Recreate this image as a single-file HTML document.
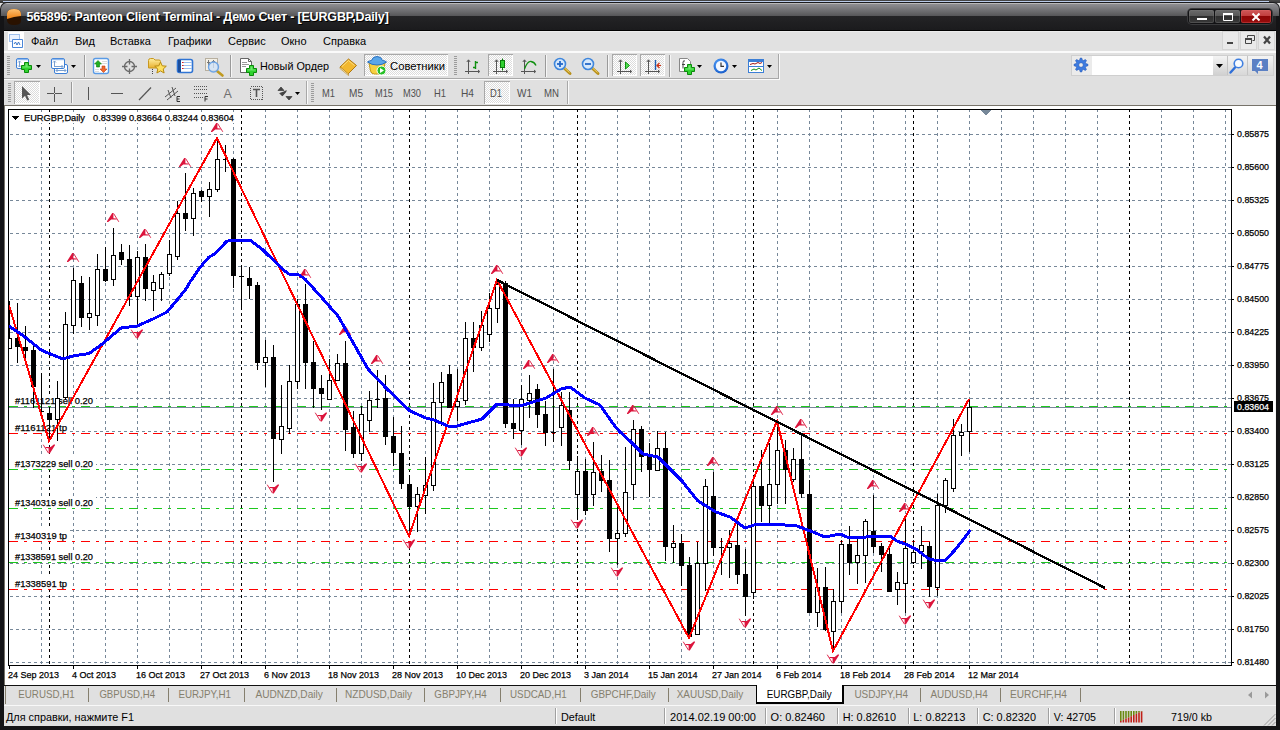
<!DOCTYPE html><html><head><meta charset="utf-8"><title>565896: Panteon Client Terminal</title><style>
html,body{margin:0;padding:0}
body{width:1280px;height:730px;position:relative;overflow:hidden;background:#e0e0e0;font-family:"Liberation Sans",sans-serif;font-size:11px;color:#000}
.a{position:absolute}
.t{position:absolute;white-space:nowrap;line-height:12px}
#title{left:0;top:2px;width:1280px;height:29px;background:#1b1b1d;border-radius:7px 7px 0 0}
#tgrad{left:1px;top:3px;width:1278px;height:13px;background:linear-gradient(#b8b8b8 0,#b8b8b8 1px,#8e8e92 1px,#565658 13px);border-radius:6px 6px 0 0}
#ttext{left:26.5px;top:10px;font-weight:bold;font-size:12.5px;letter-spacing:-0.17px;line-height:15px;color:#fff;text-shadow:1px 1px 0 #000;transform-origin:0 0}
.menu{top:35px;font-size:11px}
.wb{top:10px;height:13px;border-radius:2px}
.mdi{top:32px;width:15px;height:17px;background:#e9e9e9;box-shadow:0 0 0 1px #d4d4d4}
.sep{width:1px;background:#9a9a9a;box-shadow:1px 0 0 #f4f4f4}
.tab{top:688px;color:#86806f;font-size:11px}
.tsep{top:688px;width:1px;height:13px;background:#86806f}
.sb{top:711px}
.ssep{top:709px;width:1px;height:15px;background:#a8a8a8;box-shadow:1px 0 0 #fff}
.tf{top:87px;font-size:10px;color:#333}
</style></head><body>
<div class="a" style="left:0;top:0;width:1280px;height:3px;background:linear-gradient(#4a4a4a,#333)"></div>
<div class="a" style="left:3px;top:1px;width:1266px;height:1px;background:#b9cbea"></div>
<div class="a" id="title"></div><div class="a" id="tgrad"></div>
<div class="a" style="left:0;top:16px;width:1280px;height:14px;background:linear-gradient(#242426,#1b1b1d)"></div><div class="a" style="left:0;top:30px;width:1280px;height:1px;background:#000"></div>
<svg class="a" style="left:6px;top:8px" width="17" height="18" viewBox="0 0 17 18"><defs><linearGradient id="og" x1="0" y1="0" x2="0" y2="1"><stop offset="0" stop-color="#ffc070"/><stop offset="1" stop-color="#f08010"/></linearGradient></defs><path d="M1 12V6Q1 1 8 1Q15 1 15 6V13Q15 17 8 17Q1 17 1 12z" fill="#2a1200"/><path d="M1 11V6Q1 1 8 1Q15 1 15 6V8Q8 8.5 1 11z" fill="url(#og)"/></svg>
<div class="t" id="ttext">565896: Panteon Client Terminal - Демо Счет - [EURGBP,Daily]</div>
<div class="a" style="left:1188px;top:9px;width:84px;height:15px;border-radius:4px;background:#121214;box-shadow:0 0 0 1px #3a3a3c"></div>
<div class="a wb" style="left:1189px;width:25px;background:linear-gradient(#6a6a6a 0,#565656 50%,#2e2e2e 50%,#3a3a3a 100%);box-shadow:inset 0 0 0 1px #7a7a7a55"></div>
<div class="a wb" style="left:1215px;width:25px;background:linear-gradient(#6a6a6a 0,#565656 50%,#2e2e2e 50%,#3a3a3a 100%);box-shadow:inset 0 0 0 1px #7a7a7a55"></div>
<div class="a wb" style="left:1241px;width:30px;background:linear-gradient(#d05858 0,#c03c3c 50%,#8e0606 50%,#980c0c 100%);box-shadow:inset 0 0 0 1px #e0707055"></div>
<svg class="a" style="left:1189px;top:10px" width="83" height="14" viewBox="0 0 83 14"><rect x="8" y="8" width="10" height="2" fill="#fff"/><path d="M34.5 4H43.5V10.5H34.5z" fill="none" stroke="#fff" stroke-width="1"/><rect x="34" y="3" width="10" height="2" fill="#fff"/><path d="M63.5 3.5L70.5 10.5M70.5 3.5L63.5 10.5" stroke="#fff" stroke-width="2"/></svg>
<div class="a" style="left:0;top:16px;width:4px;height:714px;background:#141416"></div>
<div class="a" style="left:1276px;top:16px;width:4px;height:714px;background:#141416"></div>
<div class="a" style="left:0;top:726px;width:1280px;height:4px;background:#141416"></div>
<div class="a" style="left:4px;top:31px;width:1272px;height:20px;background:#e1e1e1"></div><div class="a" style="left:4px;top:31px;width:1272px;height:1px;background:#ececec"></div>
<div class="a" style="left:4px;top:51px;width:1272px;height:2px;background:#fafafa"></div>
<div class="a" style="left:8px;top:32px;width:16px;height:18px;background:#fff"></div>
<svg class="a" style="left:8px;top:32px" width="16" height="18" viewBox="0 0 16 18"><path d="M1.500 2.500H11.500V9.500H1.500z" fill="#eaf2ff" stroke="#4a86d8" stroke-dasharray="1 1"/><path d="M4.500 7.500H14.500V15.500H4.500z" fill="#fff" stroke="#4a86d8"/><path d="M6 12l1.500-2 1.500 3 1.500-3 1.500 3" fill="none" stroke="#3a76c8"/></svg>
<div class="t menu" style="left:31px">Файл</div>
<div class="t menu" style="left:75px">Вид</div>
<div class="t menu" style="left:110px">Вставка</div>
<div class="t menu" style="left:168px">Графики</div>
<div class="t menu" style="left:228px">Сервис</div>
<div class="t menu" style="left:281px">Окно</div>
<div class="t menu" style="left:323px">Справка</div>
<div class="a mdi" style="left:1223px"></div>
<div class="a mdi" style="left:1241px"></div>
<div class="a mdi" style="left:1259px"></div>
<svg class="a" style="left:1223px;top:32px" width="52" height="17" viewBox="0 0 52 17"><rect x="4" y="10" width="6" height="2" fill="#444"/><path d="M24.500 5.500V3.500H31.500V8.500H29.500M22.500 6.500H28.500V11.500H22.500z" fill="none" stroke="#444"/><path d="M22 6h7v2h-7z" fill="#444"/><path d="M41 4.500L47 11.500M47 4.500L41 11.500" stroke="#444" stroke-width="2.200"/></svg>
<div class="a" style="left:4px;top:78px;width:775px;height:1px;background:#a8a8a8"></div>
<div class="a" style="left:4px;top:79px;width:776px;height:1px;background:#fafafa"></div>
<svg class="a" style="left:0;top:0" width="1280" height="110" viewBox="0 0 1280 110" font-family="Liberation Sans, sans-serif" font-size="11px"><defs><pattern id="chk" width="2" height="2" patternUnits="userSpaceOnUse"><rect width="2" height="2" fill="#fff"/><rect width="1" height="1" fill="#dcdcdc"/><rect x="1" y="1" width="1" height="1" fill="#dcdcdc"/></pattern><linearGradient id="bl" x1="0" y1="0" x2="0" y2="1"><stop offset="0" stop-color="#8fc0f4"/><stop offset="1" stop-color="#2f78d8"/></linearGradient><linearGradient id="yl" x1="0" y1="0" x2="0" y2="1"><stop offset="0" stop-color="#fff0a0"/><stop offset="1" stop-color="#e8b030"/></linearGradient><radialGradient id="ck" cx=".4" cy=".35" r=".8"><stop offset="0" stop-color="#58a6ff"/><stop offset="1" stop-color="#0b4fc0"/></radialGradient></defs><path d="M7 56.5h3M7 58.5h3M7 60.5h3M7 62.5h3M7 64.5h3M7 66.5h3M7 68.5h3M7 70.5h3M7 72.5h3M7 74.5h3" stroke="#9c9c9c" shape-rendering="crispEdges"/><rect x="16.500" y="58.500" width="12" height="10" rx="1.500" fill="#fff" stroke="#3c7fd6"/><path d="M17 59.500h11" stroke="#8db8ee" stroke-width="1.400"/><path d="M19.500 61v6M18 62.500l1.500-1.500 1.500 1.500M18 65.500l1.500 1.500 1.500-1.500" stroke="#7aa0d0" fill="none"/><path d="M24.5 62.5h4v3h3v4h-3v3h-4v-3h-3v-4h3z" fill="#2fd22f" stroke="#0a8a0a"/><path d="M25.5 63.5h2v3h3v1h-8v-1h3z" fill="#8cf08c" opacity=".7"/><path d="M36 65h5l-2.500 3z" fill="#000"/><rect x="54.500" y="64.500" width="13" height="9" rx="1.500" fill="#fff" stroke="#3c7fd6"/><path d="M56 70.500h10M57.500 69l-1.500 1.500 1.500 1.500M64.500 69l1.500 1.500-1.500 1.500" stroke="#7aa0d0" fill="none"/><rect x="51.500" y="58.500" width="13" height="10" rx="1.500" fill="#fff" stroke="#3c7fd6"/><path d="M52 59.500h12" stroke="#8db8ee" stroke-width="1.400"/><path d="M54.500 61v6M53 62.500l1.500-1.500 1.500 1.500M54 66.500h9M61.500 65l1.500 1.500-1.500 1.500" stroke="#7aa0d0" fill="none"/><path d="M71 65h5l-2.500 3z" fill="#000"/><path d="M84.5 55V77" stroke="#9a9a9a" shape-rendering="crispEdges"/><path d="M85.5 55V77" stroke="#f6f6f6" shape-rendering="crispEdges"/><rect x="93.500" y="58.500" width="15" height="15" rx="2" fill="#fff" stroke="#5a9be6" stroke-width="1.400"/><path d="M98 60.500l3.500 3.500h-2v3h-3v-3h-2z" fill="#22b022" stroke="#0c7c0c" stroke-width=".6"/><path d="M103.500 72.500l-3.500-3.500h2v-3h3v3h2z" fill="#f06a30" stroke="#c03c10" stroke-width=".6"/><path d="M102 61.500h5M102 63.500h5M95 69.500h4M95 71.500h4" stroke="#dcdcdc"/><circle cx="129.500" cy="66.500" r="5" fill="none" stroke="#6a6a6a" stroke-width="1.300"/><path d="M129.500 59v5.500M129.500 68.500V74M122 66.500h5.500M131.500 66.500H137" stroke="#6a6a6a" stroke-width="1.300"/><path d="M148.500 60.500q0-2 2-2h3l1.500 1.500h4q1.500 0 1.500 1.500v6.500h-12z" fill="url(#yl)" stroke="#c89820"/><path d="M152.500 69v6" stroke="#444" stroke-dasharray="1 1"/><path d="M160.500 62l1.700 3.800 4.100.4-3.100 2.800.9 4-3.600-2.100-3.600 2.100.9-4-3.100-2.800 4.100-.4z" fill="#ffe060" stroke="#b88a10" stroke-width="1"/><rect x="177.500" y="59.500" width="15" height="13" rx="2" fill="#fff" stroke="#2f74d4" stroke-width="1.600"/><rect x="178" y="60" width="3" height="12" fill="#1c4e9c"/><path d="M182 62.500h10M182 65.500h10M182 68.500h10" stroke="#9cc0f0"/><path d="M182 62.500h1.500M182 65.500h1.500M182 68.500h1.500" stroke="#e02020"/><rect x="205.500" y="58.500" width="12" height="12" fill="#f4f0e6" stroke="#b8b0a0"/><path d="M208.500 60v8M213.500 60v8M207 62.500h3M212 61.500h3" stroke="#777"/><path d="M217 71L222.500 75.500" stroke="#c09a20" stroke-width="2.600" stroke-linecap="round"/><circle cx="213.500" cy="67" r="5" fill="#cfe2f8" fill-opacity=".8" stroke="#6ea4e4" stroke-width="1.400"/><path d="M230.5 55V77" stroke="#9a9a9a" shape-rendering="crispEdges"/><path d="M231.5 55V77" stroke="#f6f6f6" shape-rendering="crispEdges"/><path d="M240.500 58.500h8l3 3v11h-11z" fill="#fff" stroke="#666"/><path d="M248.500 58.500v3h3" fill="none" stroke="#666"/><path d="M242 62.500h5M242 64.500h7M242 66.500h4" stroke="#999"/><path d="M249.5 65.5h4v3h3v4h-3v3h-4v-3h-3v-4h3z" fill="#2fd22f" stroke="#0a8a0a"/><path d="M250.5 66.5h2v3h3v1h-8v-1h3z" fill="#8cf08c" opacity=".7"/><text x="260" y="70" textLength="69" lengthAdjust="spacingAndGlyphs">Новый Ордер</text><path d="M340 67l8.500-8 8 6.500-8.500 8.500z" fill="#f2b830" stroke="#b07810"/><path d="M340 67l8.500 7 0 1.500-8.500-7z" fill="#fff2c0" stroke="#b07810" stroke-width=".6"/><path d="M342 66.500l6.500-6 6 5" fill="none" stroke="#ffe080"/><rect x="364" y="54" width="84" height="22" fill="url(#chk)"/><path d="M364.5 76V54.5H448" fill="none" stroke="#a8a8a8" shape-rendering="crispEdges"/><path d="M447.5 55V75.5H365" fill="none" stroke="#fff" shape-rendering="crispEdges"/><path d="M369 63q8 -2 16 0l-1.500 8q-1 3-4 3h-5q-3 0-4-3z" fill="#f6d040" stroke="#c49a18"/><path d="M367.500 62q2-1.500 4-1.500q1-4 5.500-4t5.500 4q2.500 0 4 1.500q-4 3-9.500 3t-9.500-3z" fill="#5aa6e8" stroke="#2a70c0"/><circle cx="381.500" cy="70.500" r="4.500" fill="#28c028" stroke="#fff"/><path d="M380 68l4 2.500-4 2.500z" fill="#fff"/><text x="390" y="70" textLength="55" lengthAdjust="spacingAndGlyphs">Советники</text><path d="M454 56.5h3M454 58.5h3M454 60.5h3M454 62.5h3M454 64.5h3M454 66.5h3M454 68.5h3M454 70.5h3M454 72.5h3M454 74.5h3" stroke="#9c9c9c" shape-rendering="crispEdges"/><path d="M468.5 60V74M465 71.500H479" stroke="#555" fill="none" shape-rendering="crispEdges"/><path d="M466.8 62L468.5 59.800L470.2 62M478 70L479.8 71.500L478 73" stroke="#555" fill="none"/><path d="M475.500 61v8M475.500 62.500h2.500M473 67.500h2.500" stroke="#109010" stroke-width="1.400" fill="none"/><rect x="488" y="54" width="25" height="22" fill="url(#chk)"/><path d="M488.5 76V54.5H513" fill="none" stroke="#a8a8a8" shape-rendering="crispEdges"/><path d="M512.5 55V75.5H489" fill="none" stroke="#fff" shape-rendering="crispEdges"/><path d="M496.5 60V74M493 71.500H507" stroke="#555" fill="none" shape-rendering="crispEdges"/><path d="M494.8 62L496.5 59.800L498.2 62M506 70L507.8 71.500L506 73" stroke="#555" fill="none"/><path d="M502.500 58.500v12" stroke="#0a7a0a"/><rect x="500.500" y="60.500" width="4" height="7" fill="#30d030" stroke="#0a7a0a"/><path d="M524.5 60V74M521 71.500H535" stroke="#555" fill="none" shape-rendering="crispEdges"/><path d="M522.8 62L524.5 59.800L526.2 62M534 70L535.8 71.500L534 73" stroke="#555" fill="none"/><path d="M524.500 69q3-8 6.500-7.500t5 4" stroke="#109010" stroke-width="1.300" fill="none"/><path d="M545.5 55V77" stroke="#9a9a9a" shape-rendering="crispEdges"/><path d="M546.5 55V77" stroke="#f6f6f6" shape-rendering="crispEdges"/><path d="M564 68L570 73.5" stroke="#b8901c" stroke-width="3" stroke-linecap="round"/><path d="M564 67.5L569.5 72.5" stroke="#f0d060" stroke-width="1"/><circle cx="560" cy="64" r="5.500" fill="#d6e8fb" stroke="#3f86dc" stroke-width="1.600"/><path d="M557 64h6" stroke="#2468c8" stroke-width="1.800"/><path d="M560 61v6" stroke="#2468c8" stroke-width="1.800"/><path d="M592 68L598 73.5" stroke="#b8901c" stroke-width="3" stroke-linecap="round"/><path d="M592 67.5L597.5 72.5" stroke="#f0d060" stroke-width="1"/><circle cx="588" cy="64" r="5.500" fill="#d6e8fb" stroke="#3f86dc" stroke-width="1.600"/><path d="M585 64h6" stroke="#2468c8" stroke-width="1.800"/><path d="M607.5 55V77" stroke="#9a9a9a" shape-rendering="crispEdges"/><path d="M608.5 55V77" stroke="#f6f6f6" shape-rendering="crispEdges"/><rect x="612" y="54" width="25" height="22" fill="url(#chk)"/><path d="M612.5 76V54.5H637" fill="none" stroke="#a8a8a8" shape-rendering="crispEdges"/><path d="M636.5 55V75.5H613" fill="none" stroke="#fff" shape-rendering="crispEdges"/><path d="M620.5 60V74M617 71.500H631" stroke="#555" fill="none" shape-rendering="crispEdges"/><path d="M618.8 62L620.5 59.800L622.2 62M630 70L631.8 71.500L630 73" stroke="#555" fill="none"/><path d="M625.500 62l4 3.500-4 3.500z" fill="#50e050" stroke="#109010"/><rect x="640" y="54" width="25" height="22" fill="url(#chk)"/><path d="M640.5 76V54.5H665" fill="none" stroke="#a8a8a8" shape-rendering="crispEdges"/><path d="M664.5 55V75.5H641" fill="none" stroke="#fff" shape-rendering="crispEdges"/><path d="M648.5 60V74M645 71.500H659" stroke="#555" fill="none" shape-rendering="crispEdges"/><path d="M646.8 62L648.5 59.800L650.2 62M658 70L659.8 71.500L658 73" stroke="#555" fill="none"/><path d="M655.500 60v10" stroke="#1c5cb0" stroke-width="1.400"/><path d="M657 65.500h4M659.500 63l-2.500 2.500 2.500 2.500" stroke="#d03010" fill="none" stroke-width="1.200"/><path d="M669.5 55V77" stroke="#9a9a9a" shape-rendering="crispEdges"/><path d="M670.5 55V77" stroke="#f6f6f6" shape-rendering="crispEdges"/><path d="M679.500 58.500h8l3 3v10h-11z" fill="#fff" stroke="#888"/><path d="M685 61q-2-1-2 1.500v6M682 64.500h3" stroke="#444" fill="none"/><path d="M687.5 64.5h4v3h3v4h-3v3h-4v-3h-3v-4h3z" fill="#2fd22f" stroke="#0a8a0a"/><path d="M688.5 65.5h2v3h3v1h-8v-1h3z" fill="#8cf08c" opacity=".7"/><path d="M697 65h5l-2.500 3z" fill="#000"/><circle cx="721" cy="66" r="7.500" fill="url(#ck)"/><circle cx="721" cy="66" r="5.200" fill="#f4f8ff"/><path d="M721 62.500v3.800h3" stroke="#333" fill="none" stroke-width="1.200"/><path d="M732 65h5l-2.500 3z" fill="#000"/><rect x="748.500" y="59.500" width="15" height="13" fill="#fff" stroke="#3c7fd6"/><rect x="748" y="59" width="16" height="3" fill="#3c7fd6"/><path d="M749 66.500h14" stroke="#3c7fd6"/><path d="M750 64.500l3-1 2 .5 3-1.500 2 1 2-1" stroke="#a01818" fill="none"/><path d="M751 70.500l3-1.500 2 1 3-2 3 2.500" stroke="#109010" fill="none"/><path d="M767 65h5l-2.500 3z" fill="#000"/><path d="M778.500 54V78" stroke="#a8a8a8" shape-rendering="crispEdges"/><path d="M779.500 54V79" stroke="#fafafa" shape-rendering="crispEdges"/></svg>
<svg class="a" style="left:0;top:0" width="1280" height="110" viewBox="0 0 1280 110" font-family="Liberation Sans, sans-serif" font-size="10.300px"><path d="M8 83.5h3M8 85.5h3M8 87.5h3M8 89.5h3M8 91.5h3M8 93.5h3M8 95.5h3M8 97.5h3M8 99.5h3M8 101.5h3" stroke="#9c9c9c" shape-rendering="crispEdges"/><rect x="14" y="81" width="26" height="23" fill="url(#chk)"/><path d="M14.5 104V81.5H40" fill="none" stroke="#a8a8a8" shape-rendering="crispEdges"/><path d="M39.5 82V103.5H15" fill="none" stroke="#fff" shape-rendering="crispEdges"/><path d="M22 86v12.500l3-2.800 2.200 4.800 2-1-2.200-4.600h4z" fill="#555"/><path d="M54.500 86.500v15M47 93.500h15" stroke="#555" shape-rendering="crispEdges"/><rect x="54" y="93" width="1" height="1" fill="#e0e0e0"/><path d="M71.5 82V103" stroke="#9a9a9a" shape-rendering="crispEdges"/><path d="M72.5 82V103" stroke="#f6f6f6" shape-rendering="crispEdges"/><path d="M88.500 87V100" stroke="#555" shape-rendering="crispEdges"/><path d="M111 93.500H123" stroke="#555" shape-rendering="crispEdges"/><path d="M139 100L151 87.500" stroke="#555" stroke-width="1.200"/><path d="M165 97l11-9M167 100l11-9M168 90l3 8M172 87l3 9" stroke="#555" fill="none"/><path d="M180 96.500h-3v5h3M177 99h2.500" stroke="#333" fill="none"/><path d="M194 86.500h13M194 89.500h13M194 93.500h13M194 97.500h9" stroke="#555" stroke-dasharray="1 1" shape-rendering="crispEdges"/><path d="M208 96.500h-3v5M205 99h2.500" stroke="#333" fill="none"/><text x="223.500" y="98" font-size="12.500px" fill="#707070">A</text><rect x="250.500" y="86.500" width="12" height="13" fill="none" stroke="#555" stroke-dasharray="1 1" shape-rendering="crispEdges"/><path d="M253 89.500h7M256.500 89v8" stroke="#555" stroke-width="1.600" fill="none"/><path d="M281 87l3 3.500h-6zM289 100l-3-3.500h6zM279.500 93l2.500 2.500 4.500-5" fill="#444" stroke="#444" stroke-width=".8"/><path d="M281 93.500l1.500 1.500 3.500-4" stroke="#444" fill="none" stroke-width="1.600"/><path d="M295 92h5l-2.500 3z" fill="#000"/><path d="M306.500 81V104" stroke="#a8a8a8" shape-rendering="crispEdges"/><path d="M307.500 81V104" stroke="#fafafa" shape-rendering="crispEdges"/><path d="M311 83.5h3M311 85.5h3M311 87.5h3M311 89.5h3M311 91.5h3M311 93.5h3M311 95.5h3M311 97.5h3M311 99.5h3M311 101.5h3" stroke="#9c9c9c" shape-rendering="crispEdges"/><rect x="484" y="81" width="26" height="23" fill="url(#chk)"/><path d="M484.5 104V81.5H510" fill="none" stroke="#a8a8a8" shape-rendering="crispEdges"/><path d="M509.5 82V103.5H485" fill="none" stroke="#fff" shape-rendering="crispEdges"/><text x="322" y="97" fill="#505050" textLength="13" lengthAdjust="spacingAndGlyphs">M1</text><text x="349" y="97" fill="#505050" textLength="14" lengthAdjust="spacingAndGlyphs">M5</text><text x="375" y="97" fill="#505050" textLength="18" lengthAdjust="spacingAndGlyphs">M15</text><text x="403" y="97" fill="#505050" textLength="18" lengthAdjust="spacingAndGlyphs">M30</text><text x="434" y="97" fill="#505050" textLength="12" lengthAdjust="spacingAndGlyphs">H1</text><text x="461" y="97" fill="#505050" textLength="13" lengthAdjust="spacingAndGlyphs">H4</text><text x="490" y="97" fill="#505050" textLength="12" lengthAdjust="spacingAndGlyphs">D1</text><text x="517" y="97" fill="#505050" textLength="15" lengthAdjust="spacingAndGlyphs">W1</text><text x="544" y="97" fill="#505050" textLength="15" lengthAdjust="spacingAndGlyphs">MN</text><path d="M567.500 81V104" stroke="#a8a8a8" shape-rendering="crispEdges"/><path d="M568.500 81V104" stroke="#fafafa" shape-rendering="crispEdges"/></svg>
<div class="a" style="left:1071px;top:55px;width:203px;height:21px;background:#ebebeb;box-shadow:0 0 0 1px #cfcfcf inset"></div>
<div class="a" style="left:1092px;top:56px;width:121px;height:19px;background:#fff"></div>
<div class="a" style="left:1213px;top:56px;width:14px;height:19px;background:linear-gradient(#f4f4f4,#d0d0d0);box-shadow:1px 0 0 #c4c4c4"></div>
<div class="a" style="left:1228px;top:56px;width:19px;height:19px;background:linear-gradient(#f4f4f4,#d8d8d8);box-shadow:1px 0 0 #c4c4c4"></div>
<div class="a" style="left:1248px;top:56px;width:25px;height:19px;background:linear-gradient(#f4f4f4,#d8d8d8)"></div>
<svg class="a" style="left:1060px;top:50px" width="220" height="30" viewBox="1060 50 220 30" font-family="Liberation Sans, sans-serif"><polygon points="1087.97,64.31 1087.97,65.69 1085.78,66.45 1085.41,67.36 1086.41,69.44 1085.44,70.41 1083.36,69.41 1082.45,69.78 1081.69,71.97 1080.31,71.97 1079.55,69.78 1078.64,69.41 1076.56,70.41 1075.59,69.44 1076.59,67.36 1076.22,66.45 1074.03,65.69 1074.03,64.31 1076.22,63.55 1076.59,62.64 1075.59,60.56 1076.56,59.59 1078.64,60.59 1079.55,60.22 1080.31,58.03 1081.69,58.03 1082.45,60.22 1083.36,60.59 1085.44,59.59 1086.41,60.56 1085.41,62.64 1085.78,63.55" fill="#3d7be0" stroke="#2458b8" stroke-width=".6"/><circle cx="1081" cy="65" r="2.300" fill="#ebebeb" stroke="#2458b8" stroke-width=".6"/><path d="M1216 64h7l-3.500 4z" fill="#000"/><path d="M1230.500 72.500L1235 67.500" stroke="#2f6fd8" stroke-width="2.400" stroke-linecap="round"/><circle cx="1238.500" cy="63.500" r="4.300" fill="#f8fbff" stroke="#3f7fe0" stroke-width="1.600"/><path d="M1252 59h16v12h-10v3l-3-3h-3z" fill="#5b80c4"/><text x="1256.500" y="69" font-size="11px" font-weight="bold" fill="#fff">4</text></svg>
<div class="a" style="left:4px;top:105px;width:1272px;height:1px;background:#77736a"></div>
<div class="a" style="left:4px;top:105px;width:1px;height:580px;background:#77736a"></div><div class="a" style="left:1275px;top:106px;width:1px;height:579px;background:#f4f4f4"></div>
<div class="a" style="left:5px;top:106px;width:1270px;height:579px;background:#fff"></div>
<div class="a" style="left:4px;top:685px;width:1272px;height:1px;background:#111"></div>
<svg id="chart" width="1280" height="730" viewBox="0 0 1280 730" style="position:absolute;left:0;top:0" font-family="Liberation Sans, sans-serif" font-size="9.700px">
<g shape-rendering="crispEdges" fill="none">
<path d="M41.5 109V665M73.5 109V665M105.5 109V665M137.5 109V665M169.5 109V665M201.5 109V665M233.5 109V665M265.5 109V665M297.5 109V665M329.5 109V665M361.5 109V665M393.5 109V665M425.5 109V665M457.5 109V665M489.5 109V665M521.5 109V665M553.5 109V665M585.5 109V665M617.5 109V665M649.5 109V665M681.5 109V665M713.5 109V665M745.5 109V665M777.5 109V665M809.5 109V665M841.5 109V665M873.5 109V665M905.5 109V665M937.5 109V665M969.5 109V665M1001.5 109V665M1033.5 109V665M1065.5 109V665M1097.5 109V665M1129.5 109V665M1161.5 109V665M1193.5 109V665M1225.5 109V665" stroke="#778899" stroke-width="1" stroke-dasharray="3 3"/>
<path d="M10 134.5H1231M10 167.5H1231M10 200.5H1231M10 233.5H1231M10 266.5H1231M10 299.5H1231M10 332.5H1231M10 365.5H1231M10 398.5H1231M10 431.5H1231M10 464.5H1231M10 497.5H1231M10 530.5H1231M10 563.5H1231M10 596.5H1231M10 629.5H1231M10 662.5H1231" stroke="#778899" stroke-width="1" stroke-dasharray="3 3"/>
<path d="M49.5 109V665M241.5 109V665M409.5 109V665M577.5 109V665M753.5 109V665M913.5 109V665M1129.5 109V665" stroke="#000" stroke-width="1" stroke-dasharray="3 3"/>
</g>
<g shape-rendering="crispEdges">
<rect x="22" y="112" width="213" height="11" fill="#fff"/>
<rect x="9" y="394" width="87" height="12" fill="#fff"/>
<rect x="9" y="421" width="61" height="12" fill="#fff"/>
<rect x="9" y="457" width="87" height="12" fill="#fff"/>
<rect x="9" y="496" width="87" height="12" fill="#fff"/>
<rect x="9" y="529" width="61" height="12" fill="#fff"/>
<rect x="9" y="550" width="87" height="12" fill="#fff"/>
<rect x="9" y="577" width="61" height="12" fill="#fff"/>
</g>
<g fill="#000" stroke="#000" stroke-width=".25">
<text x="15" y="404" textLength="78" lengthAdjust="spacingAndGlyphs">#1161121 sell 0.20</text>
<text x="15" y="431" textLength="52" lengthAdjust="spacingAndGlyphs">#1161121 tp</text>
<text x="15" y="467" textLength="78" lengthAdjust="spacingAndGlyphs">#1373229 sell 0.20</text>
<text x="15" y="506" textLength="78" lengthAdjust="spacingAndGlyphs">#1340319 sell 0.20</text>
<text x="15" y="539" textLength="52" lengthAdjust="spacingAndGlyphs">#1340319 tp</text>
<text x="15" y="560" textLength="78" lengthAdjust="spacingAndGlyphs">#1338591 sell 0.20</text>
<text x="15" y="587" textLength="52" lengthAdjust="spacingAndGlyphs">#1338591 tp</text>
</g>
<g shape-rendering="crispEdges" fill="none">
<path d="M9 406.5H1231" stroke="#1ec81e" stroke-dasharray="9 6 3 6"/>
<path d="M9 433.5H1231" stroke="#ff0000" stroke-dasharray="9 6 3 6"/>
<path d="M9 469.5H1231" stroke="#1ec81e" stroke-dasharray="9 6 3 6"/>
<path d="M9 508.5H1231" stroke="#1ec81e" stroke-dasharray="9 6 3 6"/>
<path d="M9 541.5H1231" stroke="#ff0000" stroke-dasharray="9 6 3 6"/>
<path d="M9 562.5H1231" stroke="#1ec81e" stroke-dasharray="9 6 3 6"/>
<path d="M9 589.5H1231" stroke="#ff0000" stroke-dasharray="9 6 3 6"/>
<path d="M9 407.5H1231" stroke="#778899"/>
</g>
<defs><clipPath id="cc"><rect x="9" y="110" width="1222" height="555"/></clipPath></defs><g clip-path="url(#cc)">
<g shape-rendering="crispEdges">
<path d="M9.5 301V349M17.5 303V363M25.5 326V365M33.5 346V408M41.5 373V413M39 411.5H44M49.5 407V442M57.5 381V441M65.5 312V400M73.5 268V334M81.5 276V327M89.5 277V330M97.5 254V326M105.5 247V282M113.5 228V286M121.5 244V265M129.5 245V306M137.5 251V327M145.5 244V301M153.5 275V311M161.5 272V301M169.5 240V276M177.5 201V260M185.5 173V231M193.5 188V236M201.5 190V202M209.5 182V217M217.5 138V192M225.5 145V172M223 159.5H228M233.5 158V288M241.5 265V309M239 276.5H244M249.5 267V299M257.5 282V370M265.5 340V387M273.5 345V482M281.5 385V454M289.5 365V434M297.5 299V389M305.5 284V389M313.5 341V408M321.5 375V410M329.5 359V400M337.5 354V381M345.5 341V451M353.5 411V458M361.5 406V461M369.5 391V432M377.5 370V408M375 399.5H380M385.5 375V445M393.5 417V466M401.5 426V489M409.5 475V537M417.5 487V532M425.5 457V514M433.5 383V491M441.5 372V426M449.5 365V408M457.5 369V421M465.5 322V405M473.5 322V372M481.5 311V351M489.5 293V342M497.5 280V323M505.5 281V428M513.5 399V439M521.5 385V445M529.5 375V418M537.5 384V428M545.5 401V446M553.5 369V442M551 432.5H556M561.5 392V446M569.5 392V470M577.5 456V517M585.5 459V515M593.5 442V506M601.5 455V492M609.5 460V552M617.5 507V565M625.5 447V537M633.5 420V500M641.5 426V472M649.5 443V497M657.5 431V471M665.5 432V561M673.5 525V563M681.5 534V586M689.5 557V639M697.5 542V635M705.5 479V591M713.5 472V556M721.5 538V575M719 547.5H724M729.5 530V578M737.5 522V584M745.5 549V616M753.5 476V599M761.5 450V522M769.5 443V523M777.5 421V504M785.5 440V504M793.5 448V482M801.5 434V498M809.5 480V613M817.5 568V627M825.5 567V631M833.5 589V652M841.5 540V613M849.5 526V575M857.5 536V584M865.5 519V583M873.5 495V553M881.5 543V572M889.5 548V592M897.5 572V605M905.5 518V613M913.5 540V564M921.5 526V569M929.5 542V597M937.5 494V596M945.5 478V513M953.5 419V492M961.5 424V456M969.5 399V452" stroke="#000" fill="none"/>
<path d="M15 338H20V347H15zM23 347H28V351H23zM31 350H36V387H31zM47 413H52V420H47zM79 283H84V318H79zM103 269H108V281H103zM119 252H124V260H119zM127 259H132V297H127zM143 257H148V289H143zM183 213H188V219H183zM199 191H204V197H199zM231 159H236V276H231zM247 278H252V286H247zM255 285H260V363H255zM271 357H276V439H271zM303 304H308V363H303zM311 362H316V389H311zM319 388H324V394H319zM343 363H348V430H343zM351 427H356V454H351zM383 398H388V437H383zM391 436H396V453H391zM399 453H404V484H399zM407 484H412V507H407zM447 374H452V408H447zM471 338H476V348H471zM503 283H508V424H503zM511 423H516V429H511zM535 389H540V415H535zM543 414H548V433H543zM567 410H572V461H567zM583 471H588V511H583zM599 471H604V481H599zM607 480H612V539H607zM639 429H644V457H639zM647 456H652V470H647zM663 448H668V547H663zM679 543H684V566H679zM687 565H692V637H687zM711 496H716V548H711zM735 545H740V575H735zM743 574H748V597H743zM759 486H764V506H759zM783 450H788V470H783zM799 459H804V494H799zM807 494H812V613H807zM823 587H828V630H823zM847 544H852V563H847zM871 531H876V547H871zM879 546H884V555H879zM887 554H892V592H887zM927 546H932V587H927z" fill="#000"/>
<path d="M7.5 338.5H11.5V348.5H7.5zM55.5 398.5H59.5V419.5H55.5zM63.5 324.5H67.5V397.5H63.5zM71.5 280.5H75.5V325.5H71.5zM87.5 313.5H91.5V317.5H87.5zM95.5 269.5H99.5V315.5H95.5zM111.5 255.5H115.5V279.5H111.5zM135.5 257.5H139.5V296.5H135.5zM151.5 282.5H155.5V290.5H151.5zM159.5 274.5H163.5V288.5H159.5zM167.5 254.5H171.5V273.5H167.5zM175.5 213.5H179.5V256.5H175.5zM191.5 193.5H195.5V218.5H191.5zM207.5 189.5H211.5V196.5H207.5zM215.5 159.5H219.5V189.5H215.5zM263.5 357.5H267.5V362.5H263.5zM279.5 426.5H283.5V439.5H279.5zM287.5 381.5H291.5V428.5H287.5zM295.5 304.5H299.5V381.5H295.5zM327.5 380.5H331.5V399.5H327.5zM335.5 363.5H339.5V380.5H335.5zM359.5 414.5H363.5V453.5H359.5zM367.5 400.5H371.5V420.5H367.5zM415.5 494.5H419.5V506.5H415.5zM423.5 485.5H427.5V495.5H423.5zM431.5 402.5H435.5V485.5H431.5zM439.5 382.5H443.5V402.5H439.5zM455.5 401.5H459.5V406.5H455.5zM463.5 338.5H467.5V400.5H463.5zM479.5 325.5H483.5V347.5H479.5zM487.5 308.5H491.5V334.5H487.5zM495.5 284.5H499.5V308.5H495.5zM519.5 399.5H523.5V430.5H519.5zM527.5 393.5H531.5V400.5H527.5zM559.5 405.5H563.5V427.5H559.5zM575.5 471.5H579.5V494.5H575.5zM591.5 472.5H595.5V494.5H591.5zM615.5 533.5H619.5V538.5H615.5zM623.5 492.5H627.5V533.5H623.5zM631.5 429.5H635.5V484.5H631.5zM655.5 448.5H659.5V470.5H655.5zM671.5 543.5H675.5V547.5H671.5zM695.5 563.5H699.5V634.5H695.5zM703.5 486.5H707.5V563.5H703.5zM727.5 543.5H731.5V547.5H727.5zM751.5 486.5H755.5V592.5H751.5zM767.5 484.5H771.5V505.5H767.5zM775.5 450.5H779.5V484.5H775.5zM791.5 459.5H795.5V479.5H791.5zM815.5 587.5H819.5V612.5H815.5zM831.5 601.5H835.5V631.5H831.5zM839.5 544.5H843.5V601.5H839.5zM855.5 555.5H859.5V562.5H855.5zM863.5 521.5H867.5V555.5H863.5zM895.5 582.5H899.5V589.5H895.5zM903.5 548.5H907.5V583.5H903.5zM911.5 552.5H915.5V562.5H911.5zM919.5 545.5H923.5V551.5H919.5zM935.5 505.5H939.5V587.5H935.5zM943.5 480.5H947.5V505.5H943.5zM951.5 435.5H955.5V488.5H951.5zM959.5 432.5H963.5V435.5H959.5zM967.5 407.5H971.5V431.5H967.5z" fill="#fff" stroke="#000"/>
</g>
<g fill="none" stroke="#dc143c">
<g transform="translate(67,253)"><path d="M5.200 0L6.400 0L6.400 5.300L9.300 5.600L9.800 6.500L4.300 6.500L1.200 9L0 9L0 8.200z" fill="#dc143c" stroke="none"/><path d="M6.600 0.500L11.800 8.800" stroke-width="1" opacity=".9"/></g>
<g transform="translate(107,213)"><path d="M5.200 0L6.400 0L6.400 5.300L9.300 5.600L9.800 6.500L4.300 6.500L1.200 9L0 9L0 8.200z" fill="#dc143c" stroke="none"/><path d="M6.600 0.500L11.800 8.800" stroke-width="1" opacity=".9"/></g>
<g transform="translate(139,229)"><path d="M5.200 0L6.400 0L6.400 5.300L9.300 5.600L9.800 6.500L4.300 6.500L1.200 9L0 9L0 8.200z" fill="#dc143c" stroke="none"/><path d="M6.600 0.500L11.800 8.800" stroke-width="1" opacity=".9"/></g>
<g transform="translate(179,158)"><path d="M5.200 0L6.400 0L6.400 5.300L9.300 5.600L9.800 6.500L4.300 6.500L1.200 9L0 9L0 8.200z" fill="#dc143c" stroke="none"/><path d="M6.600 0.500L11.800 8.800" stroke-width="1" opacity=".9"/></g>
<g transform="translate(211,123)"><path d="M5.200 0L6.400 0L6.400 5.300L9.300 5.600L9.800 6.500L4.300 6.500L1.200 9L0 9L0 8.200z" fill="#dc143c" stroke="none"/><path d="M6.600 0.500L11.800 8.800" stroke-width="1" opacity=".9"/></g>
<g transform="translate(299,269)"><path d="M5.200 0L6.400 0L6.400 5.300L9.300 5.600L9.800 6.500L4.300 6.500L1.200 9L0 9L0 8.200z" fill="#dc143c" stroke="none"/><path d="M6.600 0.500L11.800 8.800" stroke-width="1" opacity=".9"/></g>
<g transform="translate(339,326)"><path d="M5.200 0L6.400 0L6.400 5.300L9.300 5.600L9.800 6.500L4.300 6.500L1.200 9L0 9L0 8.200z" fill="#dc143c" stroke="none"/><path d="M6.600 0.500L11.800 8.800" stroke-width="1" opacity=".9"/></g>
<g transform="translate(371,355)"><path d="M5.200 0L6.400 0L6.400 5.300L9.300 5.600L9.800 6.500L4.300 6.500L1.200 9L0 9L0 8.200z" fill="#dc143c" stroke="none"/><path d="M6.600 0.500L11.800 8.800" stroke-width="1" opacity=".9"/></g>
<g transform="translate(491,265)"><path d="M5.200 0L6.400 0L6.400 5.300L9.300 5.600L9.800 6.500L4.300 6.500L1.200 9L0 9L0 8.200z" fill="#dc143c" stroke="none"/><path d="M6.600 0.500L11.800 8.800" stroke-width="1" opacity=".9"/></g>
<g transform="translate(523,360)"><path d="M5.200 0L6.400 0L6.400 5.300L9.300 5.600L9.800 6.500L4.300 6.500L1.200 9L0 9L0 8.200z" fill="#dc143c" stroke="none"/><path d="M6.600 0.500L11.800 8.800" stroke-width="1" opacity=".9"/></g>
<g transform="translate(547,354)"><path d="M5.200 0L6.400 0L6.400 5.300L9.300 5.600L9.800 6.500L4.300 6.500L1.200 9L0 9L0 8.200z" fill="#dc143c" stroke="none"/><path d="M6.600 0.500L11.800 8.800" stroke-width="1" opacity=".9"/></g>
<g transform="translate(587,427)"><path d="M5.200 0L6.400 0L6.400 5.300L9.300 5.600L9.800 6.500L4.300 6.500L1.200 9L0 9L0 8.200z" fill="#dc143c" stroke="none"/><path d="M6.600 0.500L11.800 8.800" stroke-width="1" opacity=".9"/></g>
<g transform="translate(627,405)"><path d="M5.200 0L6.400 0L6.400 5.300L9.300 5.600L9.800 6.500L4.300 6.500L1.200 9L0 9L0 8.200z" fill="#dc143c" stroke="none"/><path d="M6.600 0.500L11.800 8.800" stroke-width="1" opacity=".9"/></g>
<g transform="translate(707,457)"><path d="M5.200 0L6.400 0L6.400 5.300L9.300 5.600L9.800 6.500L4.300 6.500L1.200 9L0 9L0 8.200z" fill="#dc143c" stroke="none"/><path d="M6.600 0.500L11.800 8.800" stroke-width="1" opacity=".9"/></g>
<g transform="translate(771,406)"><path d="M5.200 0L6.400 0L6.400 5.300L9.300 5.600L9.800 6.500L4.300 6.500L1.200 9L0 9L0 8.200z" fill="#dc143c" stroke="none"/><path d="M6.600 0.500L11.800 8.800" stroke-width="1" opacity=".9"/></g>
<g transform="translate(795,419)"><path d="M5.200 0L6.400 0L6.400 5.300L9.300 5.600L9.800 6.500L4.300 6.500L1.200 9L0 9L0 8.200z" fill="#dc143c" stroke="none"/><path d="M6.600 0.500L11.800 8.800" stroke-width="1" opacity=".9"/></g>
<g transform="translate(867,480)"><path d="M5.200 0L6.400 0L6.400 5.300L9.300 5.600L9.800 6.500L4.300 6.500L1.200 9L0 9L0 8.200z" fill="#dc143c" stroke="none"/><path d="M6.600 0.500L11.800 8.800" stroke-width="1" opacity=".9"/></g>
<g transform="translate(899,503)"><path d="M5.200 0L6.400 0L6.400 5.300L9.300 5.600L9.800 6.500L4.300 6.500L1.200 9L0 9L0 8.200z" fill="#dc143c" stroke="none"/><path d="M6.600 0.500L11.800 8.800" stroke-width="1" opacity=".9"/></g>
<g transform="translate(55,453.5) rotate(180)"><path d="M5.200 0L6.400 0L6.400 5.300L9.300 5.600L9.800 6.500L4.300 6.500L1.200 9L0 9L0 8.200z" fill="#dc143c" stroke="none"/><path d="M6.600 0.500L11.800 8.800" stroke-width="1" opacity=".9"/></g>
<g transform="translate(143,338.5) rotate(180)"><path d="M5.200 0L6.400 0L6.400 5.300L9.300 5.600L9.800 6.500L4.300 6.500L1.200 9L0 9L0 8.200z" fill="#dc143c" stroke="none"/><path d="M6.600 0.500L11.800 8.800" stroke-width="1" opacity=".9"/></g>
<g transform="translate(279,493.5) rotate(180)"><path d="M5.200 0L6.400 0L6.400 5.300L9.300 5.600L9.800 6.500L4.300 6.500L1.200 9L0 9L0 8.200z" fill="#dc143c" stroke="none"/><path d="M6.600 0.500L11.800 8.800" stroke-width="1" opacity=".9"/></g>
<g transform="translate(327,421.5) rotate(180)"><path d="M5.200 0L6.400 0L6.400 5.300L9.300 5.600L9.800 6.500L4.300 6.500L1.200 9L0 9L0 8.200z" fill="#dc143c" stroke="none"/><path d="M6.600 0.500L11.800 8.800" stroke-width="1" opacity=".9"/></g>
<g transform="translate(367,472.5) rotate(180)"><path d="M5.200 0L6.400 0L6.400 5.300L9.300 5.600L9.800 6.500L4.300 6.500L1.200 9L0 9L0 8.200z" fill="#dc143c" stroke="none"/><path d="M6.600 0.500L11.800 8.800" stroke-width="1" opacity=".9"/></g>
<g transform="translate(415,548.5) rotate(180)"><path d="M5.200 0L6.400 0L6.400 5.300L9.300 5.600L9.800 6.500L4.300 6.500L1.200 9L0 9L0 8.200z" fill="#dc143c" stroke="none"/><path d="M6.600 0.500L11.800 8.800" stroke-width="1" opacity=".9"/></g>
<g transform="translate(527,456.5) rotate(180)"><path d="M5.200 0L6.400 0L6.400 5.300L9.300 5.600L9.800 6.500L4.300 6.500L1.200 9L0 9L0 8.200z" fill="#dc143c" stroke="none"/><path d="M6.600 0.500L11.800 8.800" stroke-width="1" opacity=".9"/></g>
<g transform="translate(583,528.5) rotate(180)"><path d="M5.200 0L6.400 0L6.400 5.300L9.300 5.600L9.800 6.500L4.300 6.500L1.200 9L0 9L0 8.200z" fill="#dc143c" stroke="none"/><path d="M6.600 0.500L11.800 8.800" stroke-width="1" opacity=".9"/></g>
<g transform="translate(623,576.5) rotate(180)"><path d="M5.200 0L6.400 0L6.400 5.300L9.300 5.600L9.800 6.500L4.300 6.500L1.200 9L0 9L0 8.200z" fill="#dc143c" stroke="none"/><path d="M6.600 0.500L11.800 8.800" stroke-width="1" opacity=".9"/></g>
<g transform="translate(695,650.5) rotate(180)"><path d="M5.200 0L6.400 0L6.400 5.300L9.300 5.600L9.800 6.500L4.300 6.500L1.200 9L0 9L0 8.200z" fill="#dc143c" stroke="none"/><path d="M6.600 0.500L11.800 8.800" stroke-width="1" opacity=".9"/></g>
<g transform="translate(751,627.5) rotate(180)"><path d="M5.200 0L6.400 0L6.400 5.300L9.300 5.600L9.800 6.500L4.300 6.500L1.200 9L0 9L0 8.200z" fill="#dc143c" stroke="none"/><path d="M6.600 0.500L11.800 8.800" stroke-width="1" opacity=".9"/></g>
<g transform="translate(839,663.5) rotate(180)"><path d="M5.200 0L6.400 0L6.400 5.300L9.300 5.600L9.800 6.500L4.300 6.500L1.200 9L0 9L0 8.200z" fill="#dc143c" stroke="none"/><path d="M6.600 0.500L11.800 8.800" stroke-width="1" opacity=".9"/></g>
<g transform="translate(911,624.5) rotate(180)"><path d="M5.200 0L6.400 0L6.400 5.300L9.300 5.600L9.800 6.500L4.300 6.500L1.200 9L0 9L0 8.200z" fill="#dc143c" stroke="none"/><path d="M6.600 0.500L11.800 8.800" stroke-width="1" opacity=".9"/></g>
<g transform="translate(935,608.5) rotate(180)"><path d="M5.200 0L6.400 0L6.400 5.300L9.300 5.600L9.800 6.500L4.300 6.500L1.200 9L0 9L0 8.200z" fill="#dc143c" stroke="none"/><path d="M6.600 0.500L11.800 8.800" stroke-width="1" opacity=".9"/></g>
</g>
<polyline points="9,305 49,441 217,138 409,536 497,280 689,638 777,421 833,651 969,399" fill="none" stroke="#ff0000" stroke-width="2" shape-rendering="crispEdges"/>
<polyline points="9,326 25,337 41,350 49,353.5 63,359 73,356 89,353.5 101,345 121,328 137,326 153,319 167,312 177,300 186,289 190,282 200,267.4 208.6,257.5 214.8,253.8 226.5,241.5 232,240 250,240 263,250 284,270.5 289,274 299,275 305,279 323,299 338,316 368,369 386,388 410,411 426,418 434,420 448,426 457,426 482,419 497,404 520,406 546,398 561,389 570,387 585,398 600,405 614,425 620,432 630,441 643,454 658,457 682,481 698,501 716,512 730,517 745,528 754,525 772,524 797,526 813,532 825,537 840,534 848,537.5 860,537.5 873,536.5 890,536 897,541 905,544 916,549 925,556 930,559.6 944.5,561 955,550 963,540 970.4,530" fill="none" stroke="#0000ff" stroke-width="3" stroke-linejoin="round" shape-rendering="crispEdges"/>
<line x1="497" y1="280" x2="1105" y2="588" stroke="#000" stroke-width="2.300" shape-rendering="crispEdges"/>
</g>
<g shape-rendering="crispEdges">
<path d="M8.5 109.5H1231.5V665.5H8.5z" fill="none" stroke="#000"/>
<path d="M1232 134.5h2M1232 167.5h2M1232 200.5h2M1232 233.5h2M1232 266.5h2M1232 299.5h2M1232 332.5h2M1232 365.5h2M1232 398.5h2M1232 431.5h2M1232 464.5h2M1232 497.5h2M1232 530.5h2M1232 563.5h2M1232 596.5h2M1232 629.5h2M1232 662.5h2M9.5 666v3M73.5 666v3M137.5 666v3M201.5 666v3M265.5 666v3M329.5 666v3M393.5 666v3M457.5 666v3M521.5 666v3M585.5 666v3M649.5 666v3M713.5 666v3M777.5 666v3M841.5 666v3M905.5 666v3M969.5 666v3" stroke="#000" fill="none"/>
<path d="M980 110h11l-5.5 5.5z" fill="#778899"/>
<rect x="1234" y="401" width="39" height="11" fill="#000"/>
<path d="M12 116h7l-3.5 4z" fill="#000"/>
</g>
<g fill="#000" stroke="#000" stroke-width=".25">
<text x="1237" y="137" textLength="32" lengthAdjust="spacingAndGlyphs">0.85875</text>
<text x="1237" y="170" textLength="32" lengthAdjust="spacingAndGlyphs">0.85600</text>
<text x="1237" y="203" textLength="32" lengthAdjust="spacingAndGlyphs">0.85325</text>
<text x="1237" y="236" textLength="32" lengthAdjust="spacingAndGlyphs">0.85050</text>
<text x="1237" y="269" textLength="32" lengthAdjust="spacingAndGlyphs">0.84775</text>
<text x="1237" y="302" textLength="32" lengthAdjust="spacingAndGlyphs">0.84500</text>
<text x="1237" y="335" textLength="32" lengthAdjust="spacingAndGlyphs">0.84225</text>
<text x="1237" y="368" textLength="32" lengthAdjust="spacingAndGlyphs">0.83950</text>
<text x="1237" y="401" textLength="32" lengthAdjust="spacingAndGlyphs">0.83675</text>
<text x="1237" y="434" textLength="32" lengthAdjust="spacingAndGlyphs">0.83400</text>
<text x="1237" y="467" textLength="32" lengthAdjust="spacingAndGlyphs">0.83125</text>
<text x="1237" y="500" textLength="32" lengthAdjust="spacingAndGlyphs">0.82850</text>
<text x="1237" y="533" textLength="32" lengthAdjust="spacingAndGlyphs">0.82575</text>
<text x="1237" y="566" textLength="32" lengthAdjust="spacingAndGlyphs">0.82300</text>
<text x="1237" y="599" textLength="32" lengthAdjust="spacingAndGlyphs">0.82025</text>
<text x="1237" y="632" textLength="32" lengthAdjust="spacingAndGlyphs">0.81750</text>
<text x="1237" y="665" textLength="32" lengthAdjust="spacingAndGlyphs">0.81480</text>
<text x="1237" y="410" textLength="32" lengthAdjust="spacingAndGlyphs" fill="#fff" stroke="#fff">0.83604</text>
<text x="8" y="678" textLength="51.0" lengthAdjust="spacingAndGlyphs">24 Sep 2013</text>
<text x="72" y="678" textLength="44.0" lengthAdjust="spacingAndGlyphs">4 Oct 2013</text>
<text x="136" y="678" textLength="49.0" lengthAdjust="spacingAndGlyphs">16 Oct 2013</text>
<text x="200" y="678" textLength="49.0" lengthAdjust="spacingAndGlyphs">27 Oct 2013</text>
<text x="264" y="678" textLength="46.0" lengthAdjust="spacingAndGlyphs">6 Nov 2013</text>
<text x="328" y="678" textLength="51.0" lengthAdjust="spacingAndGlyphs">18 Nov 2013</text>
<text x="392" y="678" textLength="51.0" lengthAdjust="spacingAndGlyphs">28 Nov 2013</text>
<text x="456" y="678" textLength="51.0" lengthAdjust="spacingAndGlyphs">10 Dec 2013</text>
<text x="520" y="678" textLength="51.0" lengthAdjust="spacingAndGlyphs">20 Dec 2013</text>
<text x="584" y="678" textLength="44.5" lengthAdjust="spacingAndGlyphs">3 Jan 2014</text>
<text x="648" y="678" textLength="49.5" lengthAdjust="spacingAndGlyphs">15 Jan 2014</text>
<text x="712" y="678" textLength="49.5" lengthAdjust="spacingAndGlyphs">27 Jan 2014</text>
<text x="776" y="678" textLength="45.5" lengthAdjust="spacingAndGlyphs">6 Feb 2014</text>
<text x="840" y="678" textLength="50.5" lengthAdjust="spacingAndGlyphs">18 Feb 2014</text>
<text x="904" y="678" textLength="50.5" lengthAdjust="spacingAndGlyphs">28 Feb 2014</text>
<text x="968" y="678" textLength="50.5" lengthAdjust="spacingAndGlyphs">12 Mar 2014</text>
<text x="24" y="121" textLength="61" lengthAdjust="spacingAndGlyphs">EURGBP,Daily</text><text x="93" y="121" textLength="141" lengthAdjust="spacingAndGlyphs">0.83399 0.83664 0.83244 0.83604</text>
</g>
</svg>
<div class="a" style="left:4px;top:705px;width:1272px;height:1px;background:#f8f8f8"></div>
<div class="a" style="left:756px;top:685px;width:88px;height:19px;background:#fff;border:1px solid #000;border-top:none;border-right-width:2px;border-bottom-width:2px;box-sizing:border-box"></div>
<svg class="a" style="left:0;top:680px" width="1280" height="50" viewBox="0 680 1280 50" font-family="Liberation Sans, sans-serif" font-size="11px"><g fill="#857f6e"><text x="18.3" y="698" textLength="56.4" lengthAdjust="spacingAndGlyphs">EURUSD,H1</text><text x="99.4" y="698" textLength="55.6" lengthAdjust="spacingAndGlyphs">GBPUSD,H4</text><text x="178.4" y="698" textLength="52.6" lengthAdjust="spacingAndGlyphs">EURJPY,H1</text><text x="255.5" y="698" textLength="67.3" lengthAdjust="spacingAndGlyphs">AUDNZD,Daily</text><text x="345" y="698" textLength="67" lengthAdjust="spacingAndGlyphs">NZDUSD,Daily</text><text x="434.3" y="698" textLength="52.4" lengthAdjust="spacingAndGlyphs">GBPJPY,H4</text><text x="510" y="698" textLength="56.7" lengthAdjust="spacingAndGlyphs">USDCAD,H1</text><text x="590.7" y="698" textLength="65" lengthAdjust="spacingAndGlyphs">GBPCHF,Daily</text><text x="676.7" y="698" textLength="66.6" lengthAdjust="spacingAndGlyphs">XAUUSD,Daily</text><text x="854.4" y="698" textLength="53.6" lengthAdjust="spacingAndGlyphs">USDJPY,H4</text><text x="930.4" y="698" textLength="57.4" lengthAdjust="spacingAndGlyphs">AUDUSD,H4</text><text x="1010" y="698" textLength="56.9" lengthAdjust="spacingAndGlyphs">EURCHF,H4</text></g><text x="766.700" y="698" textLength="65" lengthAdjust="spacingAndGlyphs">EURGBP,Daily</text><path d="M88.5 688V702M168.5 688V702M244.5 688V702M336.5 688V702M424.5 688V702M500.5 688V702M580.5 688V702M668.5 688V702M920.5 688V702M1000.5 688V702M1080.5 688V702" stroke="#857f6e" shape-rendering="crispEdges"/><path d="M5.500 686V704" stroke="#857f6e" shape-rendering="crispEdges"/><path d="M1252 691.500v7l-4-3.500zM1265 691.500v7l4-3.500z" fill="#9a9a9a"/><text x="6" y="721" textLength="128" lengthAdjust="spacingAndGlyphs">Для справки, нажмите F1</text><text x="561" y="721" textLength="34.3" lengthAdjust="spacingAndGlyphs">Default</text><text x="670" y="721" textLength="86" lengthAdjust="spacingAndGlyphs">2014.02.19 00:00</text><text x="770.6" y="721" textLength="54.4" lengthAdjust="spacingAndGlyphs">O: 0.82460</text><text x="842.7" y="721" textLength="53.3" lengthAdjust="spacingAndGlyphs">H: 0.82610</text><text x="913.2" y="721" textLength="52.3" lengthAdjust="spacingAndGlyphs">L: 0.82213</text><text x="982.7" y="721" textLength="53.3" lengthAdjust="spacingAndGlyphs">C: 0.82320</text><text x="1053.8" y="721" textLength="42.2" lengthAdjust="spacingAndGlyphs">V: 42705</text><text x="1171" y="721" textLength="41" lengthAdjust="spacingAndGlyphs">719/0 kb</text><path d="M555.5 708V724M664.5 708V724M765.5 708V724M837.5 708V724M908.5 708V724M977.5 708V724M1048.5 708V724M1114.5 708V724" stroke="#a0a0a0" shape-rendering="crispEdges"/><path d="M556.5 708V724M665.5 708V724M766.5 708V724M838.5 708V724M909.5 708V724M978.5 708V724M1049.5 708V724M1115.5 708V724" stroke="#fff" shape-rendering="crispEdges"/><path d="M1120.0 711h1.6V721.0h-1.6zM1122.6 711h1.6V719.8h-1.6zM1125.2 711h1.6V718.6h-1.6zM1127.8 711h1.6V717.4h-1.6zM1130.4 711h1.6V716.2h-1.6zM1133.0 711h1.6V715.0h-1.6zM1135.6 711h1.6V713.8h-1.6zM1138.2 711h1.6V712.6h-1.6zM1140.8 711h1.6V711.4h-1.6z" fill="#6a8a10"/><path d="M1120.0 721.0h1.6V722.500h-1.6zM1122.6 719.8h1.6V722.500h-1.6zM1125.2 718.6h1.6V722.500h-1.6zM1127.8 717.4h1.6V722.500h-1.6zM1130.4 716.2h1.6V722.500h-1.6zM1133.0 715.0h1.6V722.500h-1.6zM1135.6 713.8h1.6V722.500h-1.6zM1138.2 712.6h1.6V722.500h-1.6zM1140.8 711.4h1.6V722.500h-1.6z" fill="#c02018"/><path d="M1264 725.500L1275.500 714M1268 725.500L1275.500 718M1272 725.500L1275.500 722" stroke="#9a9a9a"/></svg>
</body></html>
